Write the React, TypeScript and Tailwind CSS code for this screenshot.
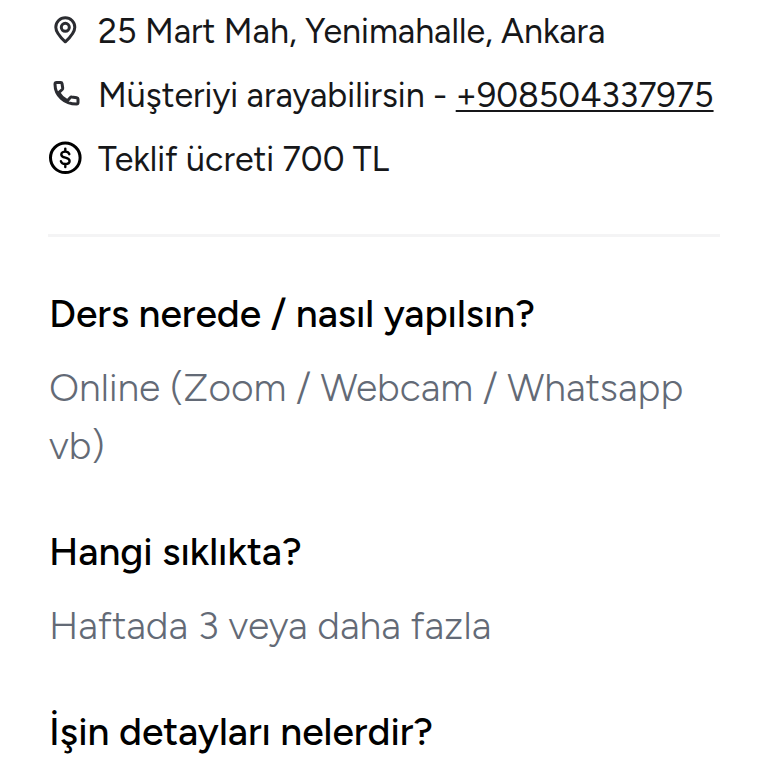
import type { ReactNode } from 'react';

interface Question {
  title: string;
  answer?: string;
}

const questions: Question[] = [
  { title: 'Ders nerede / nasıl yapılsın?', answer: 'Online (Zoom / Webcam / Whatsapp vb)' },
  { title: 'Hangi sıklıkta?', answer: 'Haftada 3 veya daha fazla' },
  { title: 'İşin detayları nelerdir?' },
];

function PinIcon() {
  return (
    <svg viewBox="0 0 34 34" className="w-[34px] h-[34px] text-[#2b2c31]" fill="none" stroke="currentColor" strokeWidth="3">
      <path d="M17.3 28.800C12.5 24.400 7.800 19.600 7.800 14.200a9.500 9.500 0 0 1 19 0C26.800 19.600 22.100 24.400 17.300 28.800Z" strokeLinejoin="round" />
      <circle cx="17.3" cy="14.300" r="4" />
    </svg>
  );
}

function PhoneIcon() {
  return (
    <svg viewBox="0 0 34 34" className="w-[34px] h-[34px] text-[#2b2c31]" fill="none" stroke="currentColor" strokeWidth="3" strokeLinejoin="round">
      <path d="M8.600 5.600h4.200c.7 0 1.100.4 1.200 1l.7 4.400c.1.600-.1 1.100-.5 1.500l-3.400 3.200c2.100 3.700 4.900 6.300 8.700 8.100l2.700-3.200c.4-.5.900-.7 1.500-.6l5.100.7c.7.1 1.200.6 1.200 1.300v3.600c0 .9-.6 1.500-1.500 1.500C16.500 27.100 7 18.500 7 7.200c0-.9.7-1.600 1.600-1.600Z" />
    </svg>
  );
}

function PriceIcon() {
  return (
    <svg viewBox="0 0 34 34" className="w-[34px] h-[34px] text-black" fill="none" stroke="currentColor" strokeLinecap="round">
      <circle cx="17.3" cy="16.800" r="14.800" strokeWidth="3" />
      <path d="M21.300 13.200c-.5-1.700-2-2.600-4.100-2.600-2.300 0-3.900 1.100-3.900 2.900 0 4.400 8.300 2 8.300 6.500 0 1.900-1.800 3-4.300 3-2.300 0-3.900-.9-4.400-2.800M17.300 7.600v2.500M17.300 23.500V26" strokeWidth="2.400" />
    </svg>
  );
}

function InfoRow({ icon, children }: { icon: ReactNode; children: ReactNode }) {
  return (
    <li className="flex items-center gap-4">
      <span className="shrink-0 pb-1">{icon}</span>
      <span className="whitespace-nowrap">{children}</span>
    </li>
  );
}

export default function App() {
  return (
    <main className="min-h-screen bg-white px-12 pt-2 font-['Figtree','Lato',sans-serif] text-[#161719]">
      <ul className="flex flex-col gap-4 text-[34px] leading-[48px]">
        <InfoRow icon={<PinIcon />}>25 Mart Mah, Yenimahalle, Ankara</InfoRow>
        <InfoRow icon={<PhoneIcon />}>
          Müşteriyi arayabilirsin -{' '}
          <a href="tel:+908504337975" className="underline decoration-2 underline-offset-3">
            +908504337975
          </a>
        </InfoRow>
        <InfoRow icon={<PriceIcon />}>Teklif ücreti 700 TL</InfoRow>
      </ul>

      <hr className="mt-[50px] border-t-[3px] border-[#f4f4f5]" />

      <div className="mt-12 flex flex-col gap-12 px-px">
        {questions.map(q => (
          <section key={q.title}>
            <h2 className="text-[39px] leading-[58px] font-medium text-black">{q.title}</h2>
            {q.answer && (
              <p className="mt-4 text-[39px] leading-[58px] font-light text-[#636a76]">{q.answer}</p>
            )}
          </section>
        ))}
      </div>
    </main>
  );
}
